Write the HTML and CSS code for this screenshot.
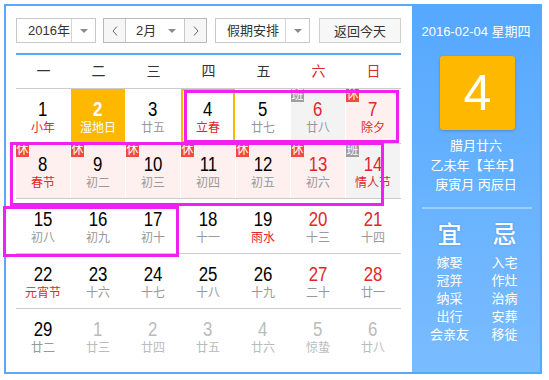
FILE: index.html
```html
<!DOCTYPE html>
<html lang="zh-CN">
<head>
    <meta charset="UTF-8">
    <title>万年历</title>
    <link rel="stylesheet" href="styles.css">
</head>
<body>
    <div class="calendar">
        <div class="main">
            <div class="toolbar">
                <div class="select year-select">
                    <span class="select-text">2016年</span>
                    <span class="select-arrow"><i class="caret"></i></span>
                </div>
                <div class="month-group">
                    <span class="nav-btn"><svg width="6" height="10" viewBox="0 0 6 10"><polyline points="5,0.5 1,5 5,9.5" fill="none" stroke="#666" stroke-width="1"/></svg></span>
                    <span class="month-text">2月<i class="caret"></i></span>
                    <span class="nav-btn"><svg width="6" height="10" viewBox="0 0 6 10"><polyline points="1,0.5 5,5 1,9.5" fill="none" stroke="#666" stroke-width="1"/></svg></span>
                </div>
                <div class="select holiday-select">
                    <span class="select-text">假期安排</span>
                    <span class="select-arrow"><i class="caret"></i></span>
                </div>
                <button class="today-btn">返回今天</button>
            </div>

            <div class="week">
                <span>一</span><span>二</span><span>三</span><span>四</span><span>五</span>
                <span class="weekend">六</span><span class="weekend">日</span>
            </div>

            <div class="days">
                <div class="row">
                    <div class="cell"><b class="num">1</b><span class="lunar fest">小年</span></div>
                    <div class="cell today"><b class="num">2</b><span class="lunar">湿地日</span></div>
                    <div class="cell"><b class="num">3</b><span class="lunar">廿五</span></div>
                    <div class="cell selected"><b class="num">4</b><span class="lunar fest">立春</span></div>
                    <div class="cell"><b class="num">5</b><span class="lunar">廿七</span></div>
                    <div class="cell work"><i class="badge ban">班</i><b class="num red">6</b><span class="lunar">廿八</span></div>
                    <div class="cell rest"><i class="badge">休</i><b class="num red">7</b><span class="lunar fest">除夕</span></div>
                </div>
                <div class="row">
                    <div class="cell rest"><i class="badge">休</i><b class="num">8</b><span class="lunar fest">春节</span></div>
                    <div class="cell rest"><i class="badge">休</i><b class="num">9</b><span class="lunar">初二</span></div>
                    <div class="cell rest"><i class="badge">休</i><b class="num">10</b><span class="lunar">初三</span></div>
                    <div class="cell rest"><i class="badge">休</i><b class="num">11</b><span class="lunar">初四</span></div>
                    <div class="cell rest"><i class="badge">休</i><b class="num">12</b><span class="lunar">初五</span></div>
                    <div class="cell rest"><i class="badge">休</i><b class="num red">13</b><span class="lunar">初六</span></div>
                    <div class="cell work"><i class="badge ban">班</i><b class="num red">14</b><span class="lunar fest">情人节</span></div>
                </div>
                <div class="row">
                    <div class="cell"><b class="num">15</b><span class="lunar">初八</span></div>
                    <div class="cell"><b class="num">16</b><span class="lunar">初九</span></div>
                    <div class="cell"><b class="num">17</b><span class="lunar">初十</span></div>
                    <div class="cell"><b class="num">18</b><span class="lunar">十一</span></div>
                    <div class="cell"><b class="num">19</b><span class="lunar fest">雨水</span></div>
                    <div class="cell"><b class="num red">20</b><span class="lunar">十三</span></div>
                    <div class="cell"><b class="num red">21</b><span class="lunar">十四</span></div>
                </div>
                <div class="row">
                    <div class="cell"><b class="num">22</b><span class="lunar fest">元宵节</span></div>
                    <div class="cell"><b class="num">23</b><span class="lunar">十六</span></div>
                    <div class="cell"><b class="num">24</b><span class="lunar">十七</span></div>
                    <div class="cell"><b class="num">25</b><span class="lunar">十八</span></div>
                    <div class="cell"><b class="num">26</b><span class="lunar">十九</span></div>
                    <div class="cell"><b class="num red">27</b><span class="lunar">二十</span></div>
                    <div class="cell"><b class="num red">28</b><span class="lunar">廿一</span></div>
                </div>
                <div class="row">
                    <div class="cell"><b class="num">29</b><span class="lunar">廿二</span></div>
                    <div class="cell other"><b class="num">1</b><span class="lunar">廿三</span></div>
                    <div class="cell other"><b class="num">2</b><span class="lunar">廿四</span></div>
                    <div class="cell other"><b class="num">3</b><span class="lunar">廿五</span></div>
                    <div class="cell other"><b class="num">4</b><span class="lunar">廿六</span></div>
                    <div class="cell other"><b class="num">5</b><span class="lunar">惊蛰</span></div>
                    <div class="cell other"><b class="num">6</b><span class="lunar">廿八</span></div>
                </div>
            </div>
        </div>

        <div class="side">
            <div class="side-date">2016-02-04 星期四</div>
            <div class="side-day">4</div>
            <div class="side-lunar">
                <div>腊月廿六</div>
                <div>乙未年【羊年】</div>
                <div>庚寅月 丙辰日</div>
            </div>
            <div class="side-line"></div>
            <div class="yiji">
                <div class="yiji-col">
                    <div class="yiji-title">宜</div>
                    <div class="yiji-list">嫁娶<br>冠笄<br>纳采<br>出行<br>会亲友</div>
                </div>
                <div class="yiji-col">
                    <div class="yiji-title">忌</div>
                    <div class="yiji-list">入宅<br>作灶<br>治病<br>安葬<br>移徙</div>
                </div>
            </div>
        </div>
    </div>

    <!-- highlight marks drawn over the calendar -->
    <div class="mark mark-1"></div>
    <div class="mark mark-2"></div>
    <div class="mark mark-3"></div>
</body>
</html>
```

FILE: styles.css
```css
body {
    margin: 0;
    background-color: white;
    font-family: 'Liberation Sans', 'Noto Sans CJK SC', sans-serif;
    color: #333;
}

.calendar {
    display: flex;
    width: 534px;
    height: 366px;
    margin: 4px 0 0 4px;
    border: 2px solid #55a9ff;
}

.main {
    width: 385px;
    padding: 12px 11px 0 10px;
}

/* toolbar */
.toolbar {
    display: flex;
    height: 25px;
    margin-bottom: 10px;
    font-size: 13px;
}

.select {
    display: flex;
    box-sizing: border-box;
    height: 25px;
    border: 1px solid #c8c8c8;
    background-color: white;
}

.select-text {
    flex: 1;
    line-height: 23px;
    padding-left: 11px;
}

.select-arrow {
    display: flex;
    align-items: center;
    justify-content: center;
    width: 23px;
    border-left: 1px solid #d6d6d6;
}

.caret {
    display: inline-block;
    width: 0;
    height: 0;
    border-left: 4px solid transparent;
    border-right: 4px solid transparent;
    border-top: 4px solid #8a8a8a;
}

.year-select {
    width: 80px;
}

.holiday-select {
    width: 95px;
    margin-left: 8px;
}

.month-group {
    display: flex;
    box-sizing: border-box;
    width: 104px;
    height: 25px;
    margin-left: 7px;
    border: 1px solid #b8b8b8;
}

.nav-btn {
    display: flex;
    align-items: center;
    justify-content: center;
    width: 21px;
    background-color: #f6f6f6;
}

.month-text {
    display: flex;
    align-items: center;
    justify-content: space-between;
    width: 40px;
    padding: 0 8px 0 10px;
    line-height: 23px;
    border-left: 1px solid #c8c8c8;
    border-right: 1px solid #c8c8c8;
}

.today-btn {
    width: 82px;
    height: 25px;
    margin-left: 9px;
    padding: 0;
    border: 1px solid #cfcfcf;
    background-color: #f7f7f7;
    font-family: inherit;
    font-size: 13px;
    color: #333;
}

/* weekday header */
.week {
    display: grid;
    grid-template-columns: repeat(7, 55px);
    height: 33px;
    line-height: 33px;
    border-top: 2px solid #55a9ff;
    border-bottom: 1px solid #cccccc;
    font-size: 14px;
    text-align: center;
    color: #333;
}

.week .weekend {
    color: #e2262b;
}

/* days */
.row {
    display: grid;
    grid-template-columns: repeat(7, 54px);
    column-gap: 1px;
    border-bottom: 1px solid #cccccc;
}

.row:last-child {
    border-bottom: none;
}

.cell {
    position: relative;
    display: flex;
    flex-direction: column;
    align-items: center;
    height: 54px;
    padding-top: 10px;
    box-sizing: border-box;
}

.num {
    display: inline-block;
    font-family: 'Liberation Sans', sans-serif;
    font-weight: normal;
    font-size: 20px;
    line-height: 20px;
    color: #000;
    transform: scaleX(0.84);
}

.num.red {
    color: #e2262b;
}

.lunar {
    margin-top: 1px;
    font-size: 12px;
    line-height: 16px;
    color: #999;
}

.lunar.fest {
    color: #e2262b;
}

.cell.rest {
    background-color: #fdf0ef;
}

.cell.work {
    background-color: #f3f3f3;
}

.cell.today {
    background-color: #ffb800;
}

.cell.today .num {
    font-weight: bold;
    color: white;
}

.cell.today .lunar {
    color: white;
}

.cell.selected {
    box-shadow: inset 0 0 0 2px #ffb800;
}

.cell.other .num,
.cell.other .lunar {
    color: #bbbbbb;
}

.badge {
    position: absolute;
    top: 0;
    left: 0;
    width: 13px;
    height: 13px;
    font-style: normal;
    font-size: 12px;
    line-height: 13px;
    text-align: center;
    color: white;
    background-color: #f24b3b;
}

.badge.ban {
    background-color: #9e9e9e;
}

/* right panel */
.side {
    width: 128px;
    padding-top: 16px;
    color: white;
    text-align: center;
    background: linear-gradient(#55a8ff, #7abcff);
}

.side-date {
    font-size: 13px;
    line-height: 20px;
}

.side-day {
    width: 75px;
    height: 74px;
    margin: 14px 0 0 28px;
    border-radius: 3px;
    background-color: #ffb800;
    box-shadow: 0 1px 3px rgba(0, 0, 0, 0.2);
    font-size: 50px;
    line-height: 74px;
}

.side-lunar {
    margin-top: 6px;
    font-size: 13px;
    line-height: 19.5px;
}

.side-line {
    height: 2px;
    margin: 12px 8px 0 10px;
    background-color: rgba(255, 255, 255, 0.35);
}

.yiji {
    display: flex;
    margin: 11px 0 0 10px;
}

.yiji-col {
    width: 55px;
}

.yiji-title {
    font-size: 24px;
    font-weight: 500;
    line-height: 30px;
    text-shadow: 0 0 2px rgba(0, 60, 160, 0.3);
}

.yiji-list {
    margin-top: 4px;
    font-size: 13px;
    line-height: 18px;
}

/* magenta highlight marks */
.mark {
    position: absolute;
    border: 3px solid #f020f0;
    box-sizing: border-box;
}

.mark-1 {
    left: 184px;
    top: 90px;
    width: 215px;
    height: 53px;
}

.mark-2 {
    left: 10px;
    top: 142px;
    width: 374px;
    height: 64px;
}

.mark-3 {
    left: 3px;
    top: 206px;
    width: 176px;
    height: 51px;
}
```
